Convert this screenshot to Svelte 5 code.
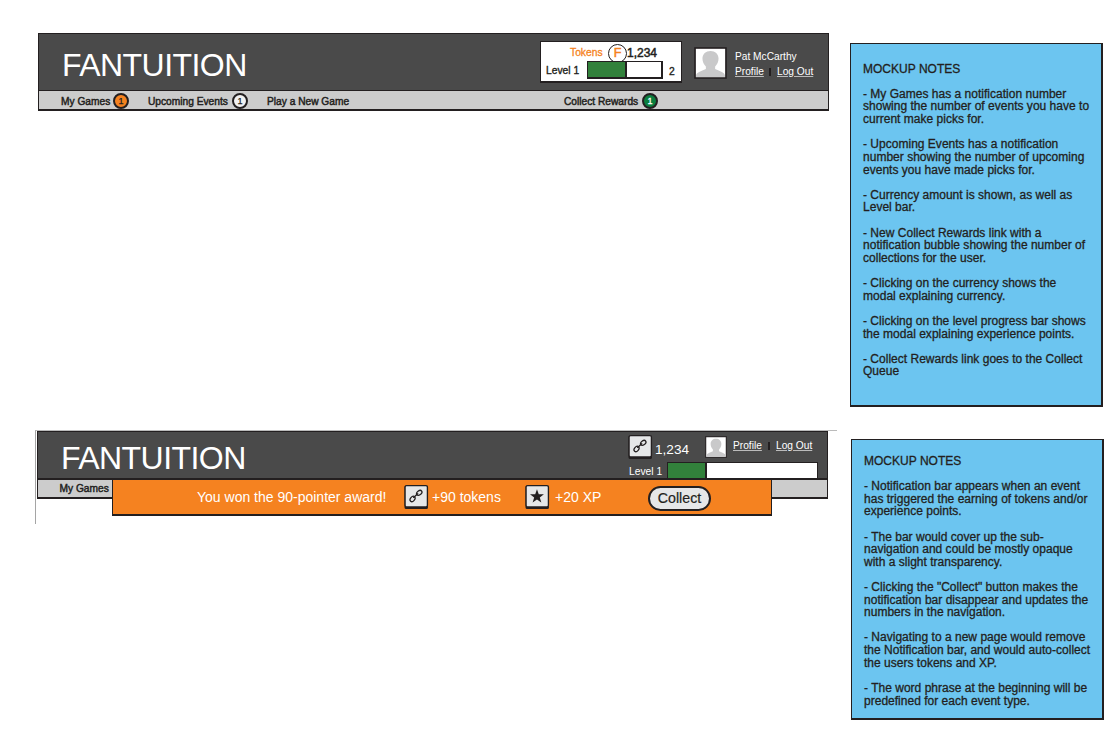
<script>
  const notesTop = [
    ['MOCKUP NOTES'],
    ['- My Games has a notification number', 'showing the number of events you have to', 'current make picks for.'],
    ['- Upcoming Events has a notification', 'number showing the number of upcoming', 'events you have made picks for.'],
    ['- Currency amount is shown, as well as', 'Level bar.'],
    ['- New Collect Rewards link with a', 'notification bubble showing the number of', 'collections for the user.'],
    ['- Clicking on the currency shows the', 'modal explaining currency.'],
    ['- Clicking on the level progress bar shows', 'the modal explaining experience points.'],
    ['- Collect Rewards link goes to the Collect', 'Queue']
  ];
  const notesBottom = [
    ['MOCKUP NOTES'],
    ['- Notification bar appears when an event', 'has triggered the earning of tokens and/or', 'experience points.'],
    ['- The bar would cover up the sub-', 'navigation and could be mostly opaque', 'with a slight transparency.'],
    ['- Clicking the "Collect" button makes the', 'notification bar disappear and updates the', 'numbers in the navigation.'],
    ['- Navigating to a new page would remove', 'the Notification bar, and would auto-collect', 'the users tokens and XP.'],
    ['- The word phrase at the beginning will be', 'predefined for each event type.']
  ];
</script>

{#snippet avatar()}
  <svg class="avatar" viewBox="0 0 32 32" preserveAspectRatio="none">
    <rect x="1" y="1" width="30" height="30" fill="#fff" stroke="#231f20" stroke-width="1.6" />
    <path d="M2 30v-1.500c0-3 5-4.500 9.500-6.500v-2.500c-2-2-3.300-5-3.300-8 0-4.500 3.300-7.500 7.800-7.500s7.800 3 7.800 7.500c0 3-1.300 6-3.300 8v2.500c4.500 2 9.500 3.500 9.500 6.500v1.500z" fill="#c9c9ca" />
  </svg>
{/snippet}

{#snippet link()}
  <svg class="tile" viewBox="0 0 24 25">
    <rect x="0.500" y="1.500" width="22.500" height="22.500" rx="1.500" fill="#231f20" />
    <rect x="1" y="1.500" width="21.500" height="20.500" rx="1.500" fill="#e6e7e8" stroke="#231f20" stroke-width="1.300" />
    <g fill="none" stroke="#231f20" stroke-width="1.200" stroke-linecap="round">
      <ellipse cx="14.600" cy="8.500" rx="2.900" ry="2" transform="rotate(-35 14.600 8.500)" />
      <ellipse cx="8.200" cy="14.400" rx="2.900" ry="2" transform="rotate(-50 8.200 14.400)" />
      <path d="M9.200 12.900l4-3.500" />
    </g>
  </svg>
{/snippet}

{#snippet notes(blocks)}
  {#each blocks as block}
    <p>{#each block as line}<span>{line}</span>{/each}</p>
  {/each}
{/snippet}

<main>
  <section class="row first">
    <header>
      <div class="top">
        <h1>FANTUITION</h1>
        <div class="wallet">
          <div class="tokens"><span class="orange">Tokens</span><i>F</i><b>1,234</b></div>
          <div class="level"><span>Level 1</span><div class="bar"><div></div></div><span class="next">2</span></div>
        </div>
        {@render avatar()}
        <div class="user">
          <span>Pat McCarthy</span>
          <div class="links"><u>Profile</u><em></em><u>Log Out</u></div>
        </div>
      </div>
      <nav>
        <span>My Games</span><i class="bubble o">1</i>
        <span>Upcoming Events</span><i class="bubble w">1</i>
        <span>Play a New Game</span>
        <span>Collect Rewards</span><i class="bubble g">1</i>
      </nav>
    </header>
    <aside>{@render notes(notesTop)}</aside>
  </section>

  <section class="row second">
    <div class="frame">
      <header>
        <div class="top">
          <h1>FANTUITION</h1>
          <div class="status">
            <div class="line">
              {@render link()}
              <span class="amount">1,234</span>
              {@render avatar()}
              <div class="links"><u>Profile</u><em></em><u>Log Out</u></div>
            </div>
            <div class="level"><span>Level 1</span><div class="bar"><div></div></div></div>
          </div>
        </div>
        <nav><span>My Games</span></nav>
        <div class="award">
          <span class="msg">You won the 90-pointer award!</span>
          {@render link()}
          <span>+90 tokens</span>
          <svg class="tile" viewBox="0 0 24 25">
            <rect x="0.500" y="1.500" width="22.500" height="22.500" rx="1.500" fill="#231f20" />
            <rect x="1" y="1.500" width="21.500" height="20.500" rx="1.500" fill="#e6e7e8" stroke="#231f20" stroke-width="1.300" />
            <path d="M11.500 5l1.700 4.800h5l-4 3.100 1.500 4.900-4.200-2.900-4.200 2.900 1.500-4.900-4-3.100h5z" fill="#231f20" />
          </svg>
          <span>+20 XP</span>
          <button>Collect</button>
        </div>
      </header>
    </div>
    <aside>{@render notes(notesBottom)}</aside>
  </section>
</main>

<style>
  :global(body) { margin: 0; background: #fff; }
  main {
    width: 1111px; height: 746px; overflow: hidden; box-sizing: border-box;
    font-family: "Liberation Sans", Arial, sans-serif; color: #231f20;
    display: grid; grid-template-rows: 430px 316px;
  }
  main :global(*) { box-sizing: border-box; }
  .row { display: grid; align-items: start; }
  .first { grid-template-columns: 791px 253px; column-gap: 21px; padding: 33px 0 0 38px; }
  .second { grid-template-columns: 802px 253px; column-gap: 14px; padding-left: 35px; }
  span, u, b { white-space: nowrap; }
  header { border: 1px solid #231f20; border-bottom-width: 2px; width: 791px; position: relative; }
  .top { background: #4a4a4a; border-bottom: 1px solid #231f20; display: grid; align-items: start; }
  .first .top { height: 57px; grid-template-columns: 501px 142px 32px 1fr; }
  h1 { margin: 0; font-size: 32px; font-weight: 400; line-height: 36px; letter-spacing: -.55px; color: #fff; }
  .first h1 { padding: 13px 0 0 23px; }

  .wallet {
    margin-top: 7px; height: 42px; background: #fff; border: 1px solid #231f20; border-bottom-width: 2px;
    display: grid; grid-template-rows: 19px 20px; font-size: 10.3px;
  }
  .tokens { display: grid; grid-template-columns: 38px 19px 1fr; padding-left: 29px; line-height: 12px; align-items: center; }
  .orange { color: #f58220; padding-top: 1px; -webkit-text-stroke: .3px #f58220; }
  .tokens i {
    width: 19px; height: 19px; border: 1.5px solid #231f20; border-radius: 50%; font-style: normal;
    font-size: 12.500px; line-height: 17px; text-align: center; color: #f58220; margin-top: 2px;
    -webkit-text-stroke: .5px #f58220;
  }
  .tokens b { font-weight: 400; font-size: 12px; padding-top: 1px; -webkit-text-stroke: .5px #231f20; }
  .level { display: grid; align-items: start; }
  .wallet .level { grid-template-columns: 41px 76px 1fr; padding-left: 5px; line-height: 12px; -webkit-text-stroke: .35px #231f20; }
  .wallet .level > span { padding-top: 4px; }
  .wallet .level > .next { padding: 5px 0 0 6px; }
  .bar { border: 1px solid #231f20; background: #fff; }
  .bar div { height: 100%; background: #32813b; border-right: 2px solid #231f20; }
  .wallet .bar { height: 18px; border-bottom-width: 2px; border-right-width: 2px; }
  .wallet .bar div { width: 39px; }

  .avatar { display: block; }
  .first .avatar { width: 33px; height: 32px; margin: 12.500px 0 0 12px; }
  .user { padding: 16px 0 0 21px; color: #fff; font-size: 10.200px; line-height: 14px; display: grid; grid-template-rows: 14px 15px; }
  .links { display: grid; grid-template-columns: 34px 8px 1fr; font-size: 10.200px; line-height: 15px; color: #fff; }
  .links em { width: 2px; height: 8px; background: #231f20; margin-top: 4px; }
  u { text-underline-offset: 1px; text-decoration-thickness: 1px; text-decoration-color: #bbb; }

  nav { background: #ccc; height: 18px; display: grid; align-items: center; font-size: 10.200px; line-height: 18px; padding-left: 22px; -webkit-text-stroke: .45px #231f20; }
  .first nav { grid-template-columns: 52px 35px 84px 35px 297px 78px 16px; }
  nav > span { padding-top: 2px; }
  .bubble {
    width: 16px; height: 16px; border: 2px solid #231f20; border-radius: 50%; font-style: normal; margin-top: 0;
    font-size: 9px; line-height: 13px; text-align: center; -webkit-text-stroke: .25px #231f20;
  }
  .o { background: #f58220; }
  .w { background: #f1f1f2; }
  .g { background: #0b7f3f; color: #fff; -webkit-text-stroke: .3px #fff; }

  aside { background: #6cc5f0; border: 1px solid #231f20; border-width: 1px 2px 2px 1px; font-size: 12px; line-height: 12.620px; letter-spacing: .015px; -webkit-text-stroke: .3px #231f20; }
  .first aside { margin-top: 10px; height: 364px; padding: 18.600px 0 0 12px; }
  .second aside { margin-top: 9px; height: 281px; padding: 14.800px 0 0 12px; }
  p { margin: 0 0 12.620px; }
  p span { display: block; }

  .frame { height: 94px; border-top: 1px solid #bbb; border-left: 1px solid #a5a5a5; padding-left: 1px; }
  .second .top { height: 48px; border-bottom-width: 2px; grid-template-columns: 590px 1fr; }
  .second h1 { padding: 8px 0 0 23px; }
  .second nav { height: 17px; padding-left: 21.500px; }
  .second nav > span { padding-top: 0; }
  .status { color: #fff; display: grid; grid-template-rows: 30px 17px; }
  .tile { display: block; width: 25px; height: 26px; }
  .line { display: grid; grid-template-columns: 27px 50px 28px 1fr; align-items: start; padding-top: 2px; }
  .amount { font-size: 13.600px; line-height: 16px; padding-top: 8px; }
  .line .avatar { width: 22px; height: 22px; margin-top: 2px; }
  .line .links { grid-template-columns: 35px 8px 1fr; margin-top: 4px; }
  .status .level { grid-template-columns: 39px 151px; font-size: 10.300px; line-height: 18px; }
  .status .level > span { padding: 1px 0 0 1px; }
  .status .bar { height: 17px; }
  .status .bar div { width: 39px; }
  .award {
    position: absolute; left: 74px; top: 47px; width: 660px; height: 37px; background: #f58220;
    border: solid #231f20; border-width: 1px 1px 2px 1px; color: #fff; font-size: 14px; line-height: 18px;
    display: grid; grid-template-columns: 207px 28px 93px 30px 93px 63px; align-items: center; padding-left: 84px;
  }
  button {
    width: 63px; height: 25px; border: 2px solid #231f20; border-radius: 13px; background: #e6e7e8; padding: 0; margin-top: 2px;
    font: 14.200px/19px "Liberation Sans", Arial, sans-serif; color: #231f20; -webkit-text-stroke: .2px #231f20;
  }
</style>
